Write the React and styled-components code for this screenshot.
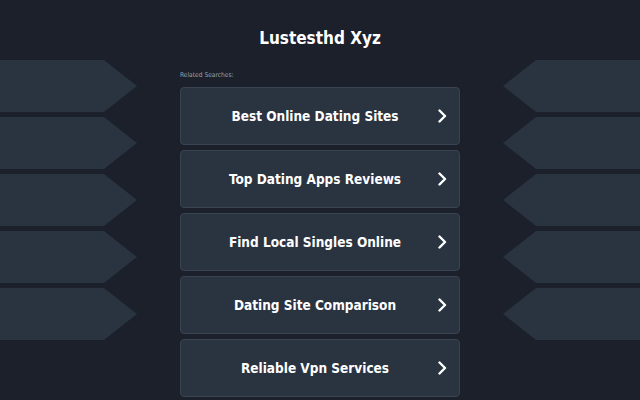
import React from "react";
import styled, { createGlobalStyle } from "styled-components";

const searches = [
  "Best Online Dating Sites",
  "Top Dating Apps Reviews",
  "Find Local Singles Online",
  "Dating Site Comparison",
  "Reliable Vpn Services",
];

const GlobalStyle = createGlobalStyle`
  html, body {
    margin: 0;
    padding: 0;
    background: #1b202b;
    font-family: "DejaVu Sans Condensed", "DejaVu Sans", "Liberation Sans", sans-serif;
    font-stretch: condensed;
    overflow: hidden;
  }
`;

const Page = styled.div`
  width: 640px;
  height: 400px;
  overflow: hidden;
  background: #1b202b;
`;

const Title = styled.h1`
  margin: 0;
  height: 60px;
  padding-top: 28px;
  box-sizing: border-box;
  text-align: center;
  color: #ffffff;
  font-size: 17px;
  font-weight: 700;
  line-height: 20px;
`;

const Body = styled.div`
  display: grid;
  grid-template-columns: 137px 280px 137px;
  justify-content: space-between;
`;

const Arrows = styled.div`
  display: flex;
  flex-direction: column;
  gap: 5px;
`;

const Arrow = styled.div`
  height: 52px;
  background: #2a3340;
  clip-path: ${(p) =>
    p.$dir === "right"
      ? "polygon(0 0, 104px 0, 137px 50%, 104px 100%, 0 100%)"
      : "polygon(33px 0, 100% 0, 100% 100%, 33px 100%, 0 50%)"};
`;

const Center = styled.div`
  display: flex;
  flex-direction: column;
`;

const Label = styled.div`
  color: #9aa3b0;
  font-size: 6.6px;
  line-height: 10px;
  margin: 10px 0 7px;
`;

const List = styled.div`
  display: flex;
  flex-direction: column;
  gap: 5px;
`;

const Card = styled.a`
  display: flex;
  align-items: center;
  height: 58px;
  box-sizing: border-box;
  background: #2a3340;
  border: 1px solid #3a4352;
  border-radius: 4px;
  padding: 0 12px 0 0;
  color: #ffffff;
  text-decoration: none;
`;

const CardText = styled.span`
  flex: 1;
  text-align: center;
  font-size: 13.5px;
  font-weight: 700;
  padding-left: 12px;
`;

const Chevron = () => (
  <svg width="10" height="14" viewBox="0 0 10 14">
    <path
      d="M2.5 1.5 L8 7 L2.5 12.5"
      fill="none"
      stroke="#ffffff"
      strokeWidth="2.4"
      strokeLinecap="round"
      strokeLinejoin="round"
    />
  </svg>
);

export default function App() {
  return (
    <Page>
      <GlobalStyle />
      <Title>Lustesthd Xyz</Title>
      <Body>
        <Arrows>
          {[0, 1, 2, 3, 4].map((i) => (
            <Arrow key={i} $dir="right" />
          ))}
        </Arrows>
        <Center>
          <Label>Related Searches:</Label>
          <List>
            {searches.map((s) => (
              <Card key={s} href="#">
                <CardText>{s}</CardText>
                <Chevron />
              </Card>
            ))}
          </List>
        </Center>
        <Arrows>
          {[0, 1, 2, 3, 4].map((i) => (
            <Arrow key={i} $dir="left" />
          ))}
        </Arrows>
      </Body>
    </Page>
  );
}
